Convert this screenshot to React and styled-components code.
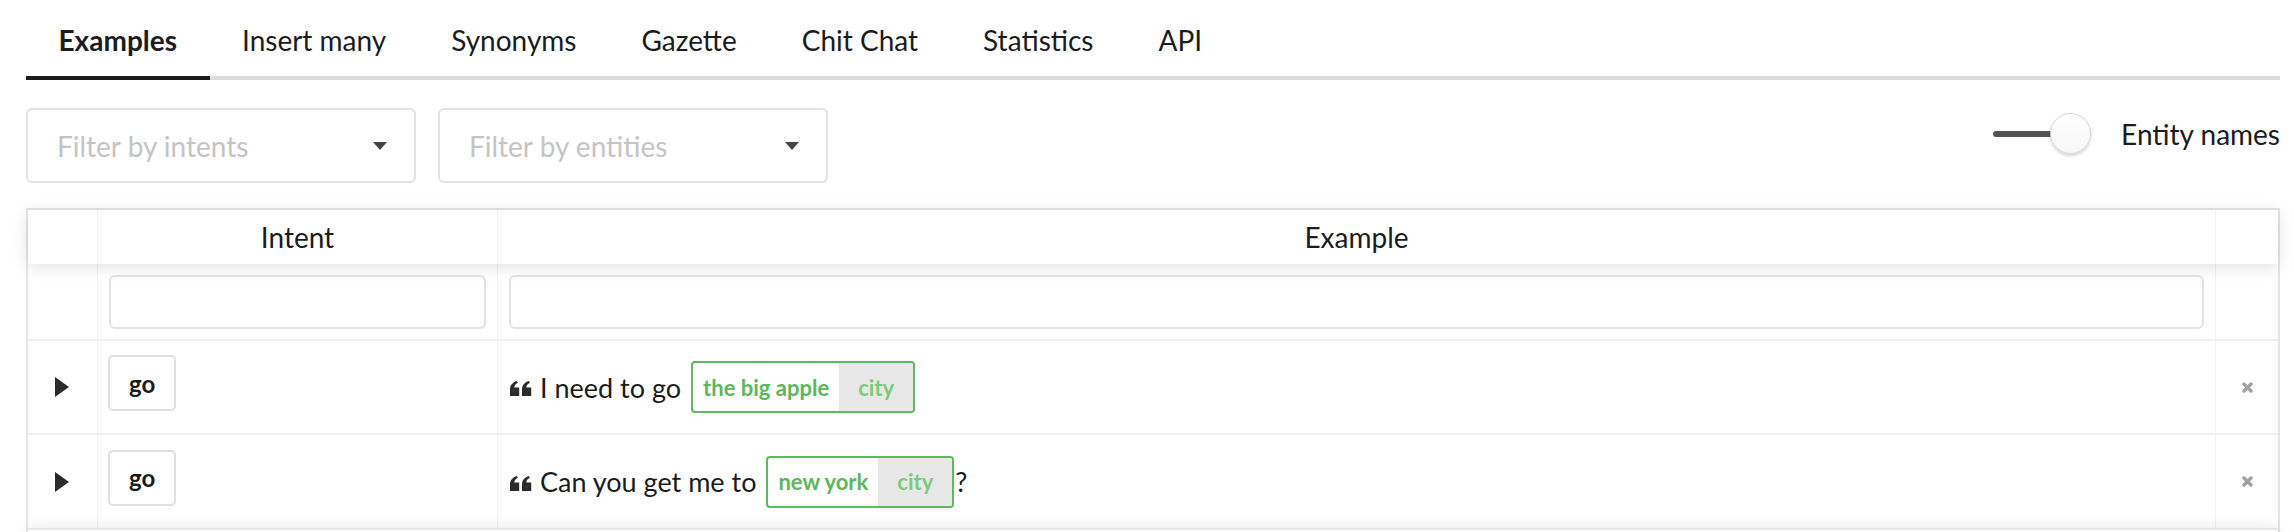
import { createGlobalStyle, styled } from "styled-components";

const GlobalStyle = createGlobalStyle`
  body {
    margin: 0;
    background: #fff;
    font-family: Lato, "Noto Sans", sans-serif;
    color: #1b1c1d;
  }
`

const Page = styled.div`
  padding: 0 14px 0 26px;
`

const Tabs = styled.div`
  display: flex;
  border-bottom: 4px solid #dcdce0;
`

const Tab = styled.div`
  padding: 24px 32.5px 20px;
  font-size: 28px;
  line-height: 32px;
  font-weight: ${(p) => (p.$active ? 700 : 400)};
  color: #1b1c1d;
  border-bottom: 4px solid ${(p) => (p.$active ? "#1b1c1d" : "transparent")};
  margin-bottom: -4px;
`

const FilterBar = styled.div`
  display: flex;
  justify-content: space-between;
  align-items: flex-start;
  margin-top: 28px;
`

const Selects = styled.div`
  display: flex;
  gap: 22px;
`

const Select = styled.div`
  width: 390px;
  height: 75px;
  box-sizing: border-box;
  border: 2px solid #e2e2e2;
  border-radius: 6px;
  display: flex;
  align-items: center;
  justify-content: space-between;
  padding: 0 27px 0 29px;
  font-size: 28px;
  color: #c4c4c4;
`

const Caret = styled.span`
  width: 0;
  height: 0;
  border-left: 7px solid transparent;
  border-right: 7px solid transparent;
  border-top: 8px solid #444;
`

const ToggleWrap = styled.div`
  display: flex;
  align-items: center;
  gap: 30px;
  margin-top: 5px;
  font-size: 28px;
  color: #1b1c1d;
`

const Slider = styled.div`
  width: 98px;
  height: 41px;
  display: flex;
  align-items: center;
`

const Track = styled.div`
  width: 66px;
  height: 6px;
  border-radius: 3px;
  background: #545454;
`

const Knob = styled.div`
  width: 41px;
  height: 41px;
  box-sizing: border-box;
  border-radius: 50%;
  background: linear-gradient(#fff, #f7f7f7);
  border: 1px solid #d6d6d6;
  box-shadow: 0 2px 3px rgba(34, 36, 38, 0.18);
  margin-left: -9px;
`

const Table = styled.div`
  margin-top: 25px;
  border: 2px solid #e6e6e6;
  border-bottom: none;
`

const Row = styled.div`
  display: grid;
  grid-template-columns: 70px 400px 1fr 62px;
  height: ${(p) => p.$h}px;
  border-bottom: ${(p) => (p.$line ? "2px solid #f0f0f0" : "none")};
  position: relative;
  z-index: ${(p) => (p.$head ? 1 : 0)};
  box-shadow: ${(p) => (p.$head ? "0 3px 16px 0 rgba(0,0,0,0.12)" : "none")};
  background: #fff;
`

const Cell = styled.div`
  display: flex;
  align-items: center;
  justify-content: ${(p) => p.$justify || "flex-start"};
  padding: 0 ${(p) => p.$px ?? 12}px;
  border-right: ${(p) => (p.$last ? "none" : "1px solid #f2f2f2")};
  min-width: 0;
`

const HeadText = styled.span`
  font-size: 28px;
  color: #1b1c1d;
`

const FilterInput = styled.div`
  flex: 1;
  height: 54px;
  box-sizing: border-box;
  border: 2px solid #e2e2e2;
  border-radius: 6px;
  margin-top: 1px;
`

const Expand = styled.span`
  width: 0;
  height: 0;
  border-top: 10px solid transparent;
  border-bottom: 10px solid transparent;
  border-left: 14px solid #2b2b2b;
  margin-left: 27px;
`

const IntentBadge = styled.span`
  height: 56px;
  box-sizing: border-box;
  padding: 0 19px;
  border: 2px solid #e0e0e0;
  border-radius: 5px;
  display: inline-flex;
  align-items: center;
  font-size: 24px;
  font-weight: 700;
  color: #1b1c1d;
  margin-top: -8px;
`

const Sentence = styled.div`
  display: flex;
  align-items: center;
  font-size: 27px;
  color: #1b1c1d;
  white-space: pre;
`

const Quote = styled.svg`
  width: 22px;
  height: 15px;
  fill: #2b2b2b;
  margin-right: 8px;
  margin-top: 3px;
`

const Chip = styled.span`
  display: inline-flex;
  height: 52px;
  box-sizing: border-box;
  border: 2px solid #5dba5d;
  border-radius: 4px;
  overflow: hidden;
  margin: 0 1px 0 10px;
  font-size: 22px;
  font-weight: 700;
`

const ChipValue = styled.span`
  display: flex;
  align-items: center;
  padding: 0 10px;
  color: #5cb85c;
`

const ChipLabel = styled.span`
  display: flex;
  align-items: center;
  padding: 0 19px;
  background: #e8e8e8;
  color: #7ccb7c;
`

const Close = styled.svg`
  width: 11px;
  height: 11px;
  stroke: #a2a2a2;
  stroke-width: 3.4;
  stroke-linecap: round;
`

const Footer = styled.div`
  height: 20px;
  border-top: 2px solid #e6e6e6;
  box-shadow: 0 0 15px 0 rgba(0, 0, 0, 0.1);
  position: relative;
`

const tabs = ["Examples", "Insert many", "Synonyms", "Gazette", "Chit Chat", "Statistics", "API"]

const rows = [
  { intent: "go", before: "I need to go", entity: "the big apple", label: "city", after: "" },
  { intent: "go", before: "Can you get me to", entity: "new york", label: "city", after: "?" },
]

function QuoteIcon() {
  return (
    <Quote viewBox="0 0 22 15">
      <path d="M0 15V8.6C0 4.2 2.4 1.3 7 0l.8 2C5.6 2.9 4.4 4.4 4.3 6.6H9.2V15z" />
      <path d="M12 15V8.6C12 4.2 14.4 1.3 19 0l.8 2c-2.2.9-3.4 2.4-3.5 4.6h4.9V15z" />
    </Quote>
  )
}

function App() {
  return (
    <Page>
      <GlobalStyle />
      <Tabs>
        {tabs.map((t, i) => (
          <Tab key={t} $active={i === 0}>{t}</Tab>
        ))}
      </Tabs>

      <FilterBar>
        <Selects>
          <Select>Filter by intents<Caret /></Select>
          <Select>Filter by entities<Caret /></Select>
        </Selects>
        <ToggleWrap>
          <Slider>
            <Track />
            <Knob />
          </Slider>
          Entity names
        </ToggleWrap>
      </FilterBar>

      <Table>
        <Row $h={54} $head>
          <Cell />
          <Cell $justify="center"><HeadText>Intent</HeadText></Cell>
          <Cell $justify="center"><HeadText>Example</HeadText></Cell>
          <Cell $last />
        </Row>
        <Row $h={75} $line>
          <Cell />
          <Cell $px={11}><FilterInput /></Cell>
          <Cell $px={11}><FilterInput /></Cell>
          <Cell $last />
        </Row>
        {rows.map((r, i) => (
          <Row key={i} $h={i === 0 ? 92 : 93} $line={i === 0}>
            <Cell $px={0}><Expand /></Cell>
            <Cell $px={10}><IntentBadge>{r.intent}</IntentBadge></Cell>
            <Cell>
              <Sentence>
                <QuoteIcon />
                {r.before}
                <Chip>
                  <ChipValue>{r.entity}</ChipValue>
                  <ChipLabel>{r.label}</ChipLabel>
                </Chip>
                {r.after}
              </Sentence>
            </Cell>
            <Cell $last $justify="center" $px={0}>
              <Close viewBox="0 0 11 11">
                <path d="M2 2l7 7M9 2l-7 7" />
              </Close>
            </Cell>
          </Row>
        ))}
        <Footer />
      </Table>
    </Page>
  )
}

export default App
